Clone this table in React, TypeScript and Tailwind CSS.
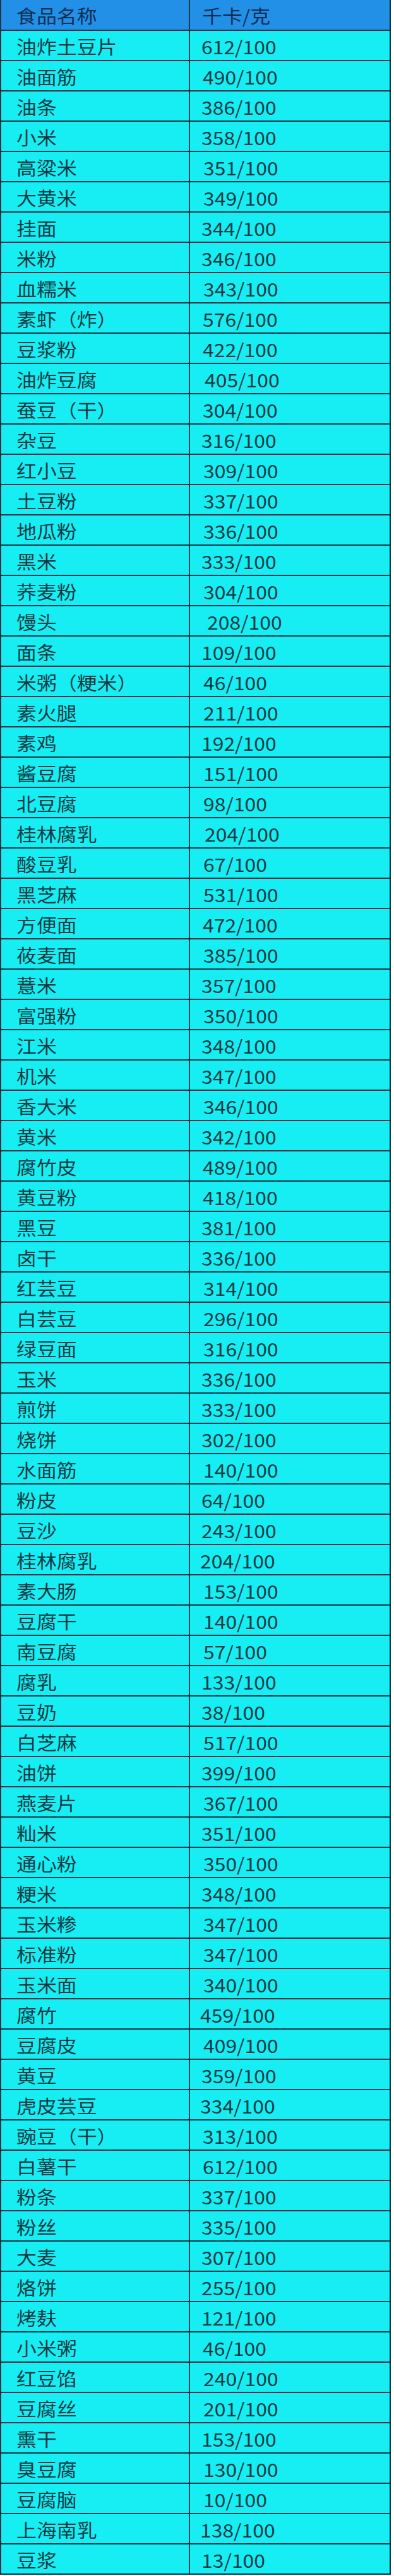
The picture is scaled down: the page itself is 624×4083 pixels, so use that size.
const rows: [string, string, number][] = [
  ["油炸土豆片", "612/100", 0],
  ["油面筋", "490/100", 2],
  ["油条", "386/100", 0],
  ["小米", "358/100", 0],
  ["高粱米", "351/100", 3],
  ["大黄米", "349/100", 3],
  ["挂面", "344/100", 0],
  ["米粉", "346/100", 0],
  ["血糯米", "343/100", 3],
  ["素虾（炸）", "576/100", 2],
  ["豆浆粉", "422/100", 2],
  ["油炸豆腐", "405/100", 5],
  ["蚕豆（干）", "304/100", 2],
  ["杂豆", "316/100", 0],
  ["红小豆", "309/100", 3],
  ["土豆粉", "337/100", 3],
  ["地瓜粉", "336/100", 3],
  ["黑米", "333/100", 0],
  ["荞麦粉", "304/100", 3],
  ["馒头", "208/100", 9],
  ["面条", "109/100", 0],
  ["米粥（粳米）", "46/100", 3],
  ["素火腿", "211/100", 3],
  ["素鸡", "192/100", 0],
  ["酱豆腐", "151/100", 3],
  ["北豆腐", "98/100", 3],
  ["桂林腐乳", "204/100", 5],
  ["酸豆乳", "67/100", 3],
  ["黑芝麻", "531/100", 3],
  ["方便面", "472/100", 2],
  ["莜麦面", "385/100", 3],
  ["薏米", "357/100", 0],
  ["富强粉", "350/100", 3],
  ["江米", "348/100", 0],
  ["机米", "347/100", 0],
  ["香大米", "346/100", 3],
  ["黄米", "342/100", 0],
  ["腐竹皮", "489/100", 2],
  ["黄豆粉", "418/100", 2],
  ["黑豆", "381/100", 0],
  ["卤干", "336/100", 0],
  ["红芸豆", "314/100", 3],
  ["白芸豆", "296/100", 3],
  ["绿豆面", "316/100", 3],
  ["玉米", "336/100", 0],
  ["煎饼", "333/100", 0],
  ["烧饼", "302/100", 0],
  ["水面筋", "140/100", 3],
  ["粉皮", "64/100", 0],
  ["豆沙", "243/100", 0],
  ["桂林腐乳", "204/100", -2],
  ["素大肠", "153/100", 3],
  ["豆腐干", "140/100", 3],
  ["南豆腐", "57/100", 3],
  ["腐乳", "133/100", 0],
  ["豆奶", "38/100", 0],
  ["白芝麻", "517/100", 3],
  ["油饼", "399/100", 0],
  ["燕麦片", "367/100", 3],
  ["籼米", "351/100", 0],
  ["通心粉", "350/100", 3],
  ["粳米", "348/100", 0],
  ["玉米糁", "347/100", 3],
  ["标准粉", "347/100", 3],
  ["玉米面", "340/100", 3],
  ["腐竹", "459/100", -2],
  ["豆腐皮", "409/100", 3],
  ["黄豆", "359/100", 0],
  ["虎皮芸豆", "334/100", -2],
  ["豌豆（干）", "313/100", 2],
  ["白薯干", "612/100", 2],
  ["粉条", "337/100", 0],
  ["粉丝", "335/100", 0],
  ["大麦", "307/100", 0],
  ["烙饼", "255/100", 0],
  ["烤麸", "121/100", 0],
  ["小米粥", "46/100", 2],
  ["红豆馅", "240/100", 3],
  ["豆腐丝", "201/100", 3],
  ["熏干", "153/100", 0],
  ["臭豆腐", "130/100", 3],
  ["豆腐脑", "10/100", 3],
  ["上海南乳", "138/100", -2],
  ["豆浆", "13/100", 0],
];

const valuePad: Record<number, string> = {
  [-2]: "pl-[16px]",
  0: "pl-[18px]",
  2: "pl-[20px]",
  3: "pl-[21px]",
  5: "pl-[23px]",
  9: "pl-[27px]",
};

const font = { fontFamily: '"Noto Sans CJK SC", "Noto Sans", sans-serif' };

function Cell({ text, pad, className = "" }: { text: string; pad: string; className?: string }) {
  return (
    <div className={`flex items-center pt-[2px] ${pad} ${className}`}>
      <span className="inline-block origin-left scale-x-[1.1] whitespace-pre text-[29px] leading-none">
        {text}
      </span>
    </div>
  );
}

export default function App() {
  return (
    <div className="min-h-screen bg-white" style={font}>
      <div className="w-[619px] border-x-2 border-[#0c3444]">
        {/* header */}
        <div className="grid h-[49px] grid-cols-[299px_1fr] border-b-2 border-[#0c3444] bg-[#2190e6] text-[#0e2d52]">
          <Cell text="食品名称" pad="pl-[24px]" className="border-r-2 border-[#0c3444]" />
          <Cell text="千卡/克" pad="pl-[19px]" />
        </div>
        {rows.map(([name, value, off], i) => (
          <div
            key={i}
            className="grid h-[48px] grid-cols-[299px_1fr] border-b-2 border-[#0c3444] bg-[#16eef4] text-[#0c3a42]"
          >
            <Cell text={name} pad="pl-[24px]" className="border-r-2 border-[#0c3444]" />
            <Cell text={value} pad={valuePad[off]} />
          </div>
        ))}
      </div>
    </div>
  );
}
